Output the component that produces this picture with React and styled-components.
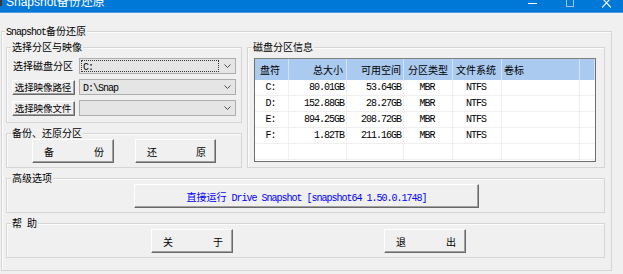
import React from "react";
import styled, { createGlobalStyle } from "styled-components";

const GlobalStyle = createGlobalStyle`
  html, body {
    margin: 0;
    padding: 0;
    background: #f0f0f0;
  }
  body {
    font-family: "Noto Sans CJK SC", "Liberation Sans", sans-serif;
    font-size: 10px;
    color: #000;
  }
`;

const partitions = [
  { id: "C", drive: "C:", size: "80.01GB", free: "53.64GB", type: "MBR", fs: "NTFS" },
  { id: "D", drive: "D:", size: "152.88GB", free: "28.27GB", type: "MBR", fs: "NTFS" },
  { id: "E", drive: "E:", size: "894.25GB", free: "208.72GB", type: "MBR", fs: "NTFS" },
  { id: "F", drive: "F:", size: "1.82TB", free: "211.16GB", type: "MBR", fs: "NTFS" },
  { id: "empty", drive: "", size: "", free: "", type: "", fs: "" },
];

const columns = [
  { key: "drive", title: "盘符", head: "left", headPad: "0 0 0 5px", body: "center" },
  { key: "size", title: "总大小", head: "right", headPad: "0 3px 0 0", body: "right" },
  { key: "free", title: "可用空间", head: "right", headPad: "0 2px 0 0", body: "right" },
  { key: "type", title: "分区类型", head: "left", headPad: "0 0 0 4px", body: "center" },
  { key: "fs", title: "文件系统", head: "left", headPad: "0 0 0 3px", body: "center" },
  { key: "label", title: "卷标", head: "left", headPad: "0 0 0 2px", body: "left" },
  { key: "rest", title: "", head: "left", headPad: "0", body: "left" },
];

function Chevron() {
  return (
    <svg width="7" height="4" viewBox="0 0 7 4">
      <path d="M0.5 0.5 L3.5 3.5 L6.5 0.5" fill="none" stroke="#4d4d4d" strokeWidth="1" />
    </svg>
  );
}

function App() {
  return (
    <Window>
      <GlobalStyle />
      <TitleBar>
        <AppIcon width="3" height="7" viewBox="0 0 3 7">
          <rect x="0" y="0" width="2" height="6" fill="#3a3a3a" />
        </AppIcon>
        <TitleText>
          Snapshot备份还原
        </TitleText>
        <Caption>
          <CaptionButton>
            <svg width="9" height="6" viewBox="0 0 9 6">
              <rect x="0" y="3" width="9" height="1" fill="#fff" />
            </svg>
          </CaptionButton>
          <CaptionButton>
            <svg width="8" height="8" viewBox="0 0 8 8">
              <rect x="0.5" y="-3" width="7" height="9.5" fill="none" stroke="#9ec6ee" strokeWidth="1" />
            </svg>
          </CaptionButton>
          <CaptionButton>
            <svg width="9" height="8" viewBox="0 0 9 8">
              <path d="M0 -2 L9 7.5 M9 -2 L0 7.5" stroke="#fff" strokeWidth="1.1" />
            </svg>
          </CaptionButton>
        </Caption>
      </TitleBar>

      <Body>
        <Group $h={240}>
          <Legend $indent={3}>
            <Lat>Snapshot</Lat>备份还原
          </Legend>
          <Stack>
            <TopRow>
              <LeftColumn>
                <Group $h={76}>
                  <Legend>选择分区与映像</Legend>
                  <Rows>
                    <Row>
                      <RowLabel>选择磁盘分区</RowLabel>
                      <Combo>
                        <ComboValue $focus>
                          <Lat>C:</Lat>
                        </ComboValue>
                        <Chevron />
                      </Combo>
                    </Row>
                    <Row>
                      <SmallButton>选择映像路径</SmallButton>
                      <Combo>
                        <ComboValue>
                          <Lat>D:\Snap</Lat>
                        </ComboValue>
                        <Chevron />
                      </Combo>
                    </Row>
                    <Row>
                      <SmallButton>选择映像文件</SmallButton>
                      <Combo>
                        <ComboValue />
                        <Chevron />
                      </Combo>
                    </Row>
                  </Rows>
                </Group>
                <Group $h={35}>
                  <Legend>备份、还原分区</Legend>
                  <ButtonRow $left={25} $gap={21}>
                    <SpreadButton $w={82}>
                      <span>备</span>
                      <span>份</span>
                    </SpreadButton>
                    <SpreadButton $w={81}>
                      <span>还</span>
                      <span>原</span>
                    </SpreadButton>
                  </ButtonRow>
                </Group>
              </LeftColumn>

              <Group $h={121} $grow>
                <Legend>磁盘分区信息</Legend>
                <TableWrap>
                  <Table>
                    {columns.map((c) => (
                      <HeadCell key={c.key} $align={c.head} $pad={c.headPad}>
                        {c.title}
                      </HeadCell>
                    ))}
                    {partitions.map((p) =>
                      columns.map((c) => (
                        <Cell key={p.id + c.key} $align={c.body} $last={c.key === "rest"}>
                          {p[c.key] || ""}
                        </Cell>
                      ))
                    )}
                  </Table>
                </TableWrap>
              </Group>
            </TopRow>

            <Group $h={35}>
              <Legend>高级选项</Legend>
              <ButtonRow $left={127} $gap={0}>
                <RunButton>
                  直接运行<Lat> Drive Snapshot [snapshot64 1.50.0.1748]</Lat>
                </RunButton>
              </ButtonRow>
            </Group>

            <Group $h={35}>
              <Legend>
                帮<Lat> </Lat>助
              </Legend>
              <ButtonRow $left={144} $gap={151}>
                <SpreadButton $w={82}>
                  <span>关</span>
                  <span>于</span>
                </SpreadButton>
                <SpreadButton $w={82}>
                  <span>退</span>
                  <span>出</span>
                </SpreadButton>
              </ButtonRow>
            </Group>
          </Stack>
        </Group>
      </Body>
    </Window>
  );
}

const Window = styled.div`
  width: 623px;
  height: 274px;
  overflow: hidden;
  background: #f0f0f0;
  display: flex;
  flex-direction: column;
`;

const TitleBar = styled.div`
  /* only the lower strip of the caption is in view */
  flex: none;
  height: 12px;
  border-bottom: 1px solid #4a9be2;
  background: #0078d7;
  color: #fff;
  display: flex;
  align-items: flex-start;
  overflow: hidden;
`;

const AppIcon = styled.svg`
  flex: none;
  display: block;
`;

const TitleText = styled.div`
  margin: -6px 0 0 3px;
  font-family: "Liberation Sans", "Noto Sans CJK SC", sans-serif;
  font-size: 12px;
  line-height: 16px;
  white-space: nowrap;
`;

const Caption = styled.div`
  margin-left: auto;
  display: flex;
  margin-right: -2px;
`;

const CaptionButton = styled.div`
  width: 37px;
  height: 12px;
  display: flex;
  justify-content: center;
  align-items: flex-start;

  svg {
    display: block;
  }
`;

const Body = styled.div`
  flex: 1;
  padding: 18px 11px 0 1px;
`;

const Group = styled.div`
  box-sizing: border-box;
  height: ${(p) => p.$h}px;
  flex: ${(p) => (p.$grow ? 1 : "none")};
  border: 1px solid #d5d5d5;
  box-shadow: inset 1px 1px 0 #fcfcfc;
  display: flex;
  flex-direction: column;
`;

const Legend = styled.div`
  align-self: flex-start;
  height: 12px;
  margin: -7px 0 0 ${(p) => p.$indent ?? 4}px;
  padding: 0 1px;
  line-height: 12px;
  background: #f0f0f0;
  white-space: nowrap;
`;

const Lat = styled.span`
  font-family: "Liberation Mono", monospace;
  letter-spacing: -1px;
  white-space: pre;
`;

const Stack = styled.div`
  display: flex;
  flex-direction: column;
  gap: 10px;
  padding: 10px 6px 0 4px;
`;

const TopRow = styled.div`
  display: flex;
  gap: 5px;
`;

const LeftColumn = styled.div`
  width: 236px;
  flex: none;
  display: flex;
  flex-direction: column;
  gap: 10px;
`;

const Rows = styled.div`
  display: flex;
  flex-direction: column;
  gap: 5px;
  padding: 5px 5px 0 5px;
`;

const Row = styled.div`
  display: flex;
  gap: 4px;
  height: 16px;
  align-items: center;
`;

const RowLabel = styled.div`
  width: 63px;
  padding-left: 1px;
  box-sizing: border-box;
  white-space: nowrap;
  line-height: 12px;
`;

const Button = styled.button`
  box-sizing: border-box;
  margin: 0;
  font: inherit;
  color: #000;
  background: #f0f0f0;
  border: 1px solid;
  border-color: #ffffff #696969 #696969 #ffffff;
  box-shadow: inset -1px -1px 0 #a0a0a0;
  cursor: default;
  white-space: nowrap;
`;

const SmallButton = styled(Button)`
  width: 63px;
  height: 15px;
  padding: 0 1px 0 0;
  line-height: 12px;
  font-size: 9.6px;
  letter-spacing: -0.2px;
  text-align: center;
  overflow: visible;
`;

const SpreadButton = styled(Button)`
  width: ${(p) => p.$w}px;
  height: 24px;
  padding: 0 9px 0 11px;
  display: flex;
  justify-content: space-between;
  align-items: center;
`;

const RunButton = styled(Button)`
  width: 345px;
  height: 24px;
  padding: 0;
  color: #0000ff;
`;

const ButtonRow = styled.div`
  display: flex;
  gap: ${(p) => p.$gap}px;
  padding-left: ${(p) => p.$left}px;
`;

const Combo = styled.div`
  box-sizing: border-box;
  width: 157px;
  height: 16px;
  border: 1px solid #adadad;
  background: #e5e5e5;
  display: flex;
  align-items: center;
  padding: 0 4px 0 1px;
  gap: 5px;

  svg {
    display: block;
    flex: none;
  }
`;

const ComboValue = styled.div`
  flex: 1;
  box-sizing: border-box;
  height: 12px;
  line-height: 10px;
  padding-left: 1px;
  border: 1px dotted ${(p) => (p.$focus ? "#333" : "transparent")};
`;

const TableWrap = styled.div`
  padding: 5px 8px 0 6px;
`;

const Table = styled.div`
  box-sizing: border-box;
  height: 104px;
  border: 1px solid #6e6e6e;
  border-top-color: #808080;
  background: #fff;
  display: grid;
  grid-template-columns: 34px 58px 57px 49px 49px 78px 1fr;
  grid-template-rows: 21px repeat(5, 16px);
  align-content: start;
`;

const HeadCell = styled.div`
  box-sizing: border-box;
  background: #abcaef;
  border-right: 1px solid #d3e3f6;
  display: flex;
  align-items: center;
  justify-content: ${(p) => (p.$align === "right" ? "flex-end" : "flex-start")};
  padding: ${(p) => p.$pad};
  white-space: nowrap;
`;

const Cell = styled.div`
  box-sizing: border-box;
  border-bottom: 1px solid #efefef;
  border-right: ${(p) => (p.$last ? "none" : "1px solid #efefef")};
  display: flex;
  align-items: center;
  justify-content: ${(p) =>
    p.$align === "right" ? "flex-end" : p.$align === "center" ? "center" : "flex-start"};
  padding: 0 2px 0 0;
  font-family: "Liberation Mono", monospace;
  letter-spacing: -1px;
  white-space: nowrap;
`;

export default App;
